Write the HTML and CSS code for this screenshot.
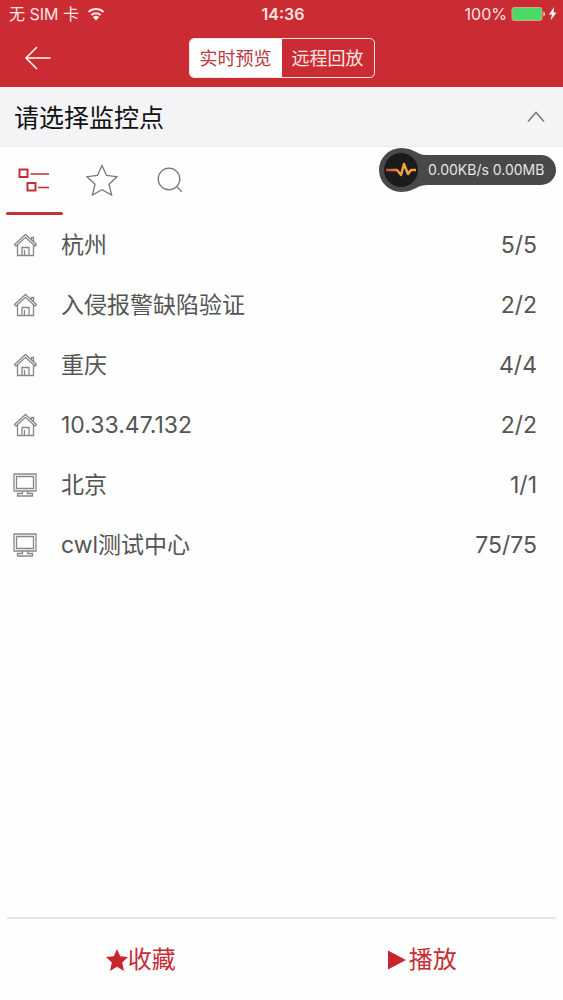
FILE: index.html
```html
<!DOCTYPE html>
<html lang="zh-CN">
<head>
<meta charset="utf-8">
<meta name="viewport" content="width=device-width, initial-scale=1">
<title>请选择监控点</title>
<link rel="stylesheet" href="styles.css">
</head>
<body>
<svg class="defs" aria-hidden="true">
  <symbol id="house" viewBox="0 0 24 24">
    <path d="M1.500 11.500 12.500 1.500l11 10-1.500 1.500-9.500-8.700L3 13z"/>
    <path d="M18.500 6.500V4.500h2v4M4.500 12v10.500H9v-8h7v8h4.500V12M11.500 22v-5M9 22.500h7"/>
  </symbol>
  <symbol id="monitor" viewBox="0 0 24 24">
    <path d="M1 1h22v17H1zM3.500 3.500h17v12h-17zM9.500 18v2.500H4.500V23h15v-2.500h-5V18"/>
  </symbol>
</svg>
<div class="app">
  <header class="top">
    <div class="status">
      <div class="carrier"><span>无 SIM 卡</span>
        <svg class="wifi" viewBox="0 0 18 14"><path d="M1.500 5a11 11 0 0 1 15 0M4.300 8a7 7 0 0 1 9.400 0"/><path class="solid" d="M9 13.500 6 10.200a4.300 4.300 0 0 1 6 0z"/></svg>
      </div>
      <time>14:36</time>
      <div class="power"><span>100%</span>
        <svg class="battery" viewBox="0 0 46 16"><rect x="1" y="1.500" width="30" height="13" rx="2"/><path class="nub" d="M32.500 5.500q3 2.500 0 5z"/><path class="bolt" d="m43 1-5 7.500h3l-1.500 6 6-8h-3z"/></svg>
      </div>
    </div>
    <nav class="nav">
      <button class="back" aria-label="返回"><svg viewBox="0 0 26 24"><path d="M25.500 12H1M12 1 1 12l11 11"/></svg></button>
      <div class="segment">
        <button class="on">实时预览</button><button>远程回放</button>
      </div>
    </nav>
  </header>
  <div class="heading">
    <h1>请选择监控点</h1>
    <button aria-label="收起"><svg viewBox="0 0 18 12"><path d="M1 10.500 9 1.500l8 9"/></svg></button>
  </div>
  <div class="tabs">
    <button class="tab active" aria-label="列表"><svg viewBox="0 0 32 24"><path class="thick" d="M1.500 1.500h8v7.500h-8zM9.500 15h8v7.500h-8z"/><path d="M12.500 6H31M20 19.500h11"/></svg></button>
    <button class="tab" aria-label="收藏夹"><svg viewBox="0 0 32 32"><path d="m16 1.500 4.500 10 10.500 1.200-8 7.500 2.600 10.800L16 25.700 6.400 31 9 20.200 1 12.700l10.500-1.200z"/></svg></button>
    <button class="tab" aria-label="搜索"><svg viewBox="0 0 32 32"><circle cx="15" cy="15" r="10.800"/><path d="m22.800 22.800 5 5"/></svg></button>
  </div>
  <ul class="list">
    <li><svg><use href="#house"/></svg><span>杭州</span><b>5/5</b></li>
    <li><svg><use href="#house"/></svg><span>入侵报警缺陷验证</span><b>2/2</b></li>
    <li><svg><use href="#house"/></svg><span>重庆</span><b>4/4</b></li>
    <li><svg><use href="#house"/></svg><span>10.33.47.132</span><b>2/2</b></li>
    <li><svg><use href="#monitor"/></svg><span>北京</span><b>1/1</b></li>
    <li><svg><use href="#monitor"/></svg><span>cwl测试中心</span><b>75/75</b></li>
  </ul>
  <footer>
    <hr>
    <div class="actions">
      <button><svg viewBox="0 0 22 22"><path d="m11 0 3.200 7.300 7.800.8-5.800 5.400L18 22l-7-4.200L4 22l1.800-8.500L0 8.100l7.800-.8z"/></svg>收藏</button>
      <button><svg class="play" viewBox="0 0 18 22"><path d="M0 1.500 18 11 0 20.500z"/></svg>播放</button>
    </div>
  </footer>
  <div class="traffic">
    <svg viewBox="0 0 178 44">
      <defs><linearGradient id="pulse" gradientUnits="userSpaceOnUse" x1="7" y1="0" x2="36" y2="0"><stop offset="0" stop-color="#d9422f"/><stop offset=".5" stop-color="#f0a23c"/><stop offset="1" stop-color="#f5a13c"/></linearGradient></defs>
      <path fill="#4a494a" d="M22 0c8 0 13 3 18 5.500q3 1.500 8 1.500h114a15 15 0 0 1 0 30H48q-5 0-8 1.500C35 41 30 44 22 44a22 22 0 0 1 0-44z"/>
      <circle cx="22" cy="22" r="17" fill="#1b1a1c"/>
      <path fill="none" stroke="url(#pulse)" stroke-width="2.500" stroke-linejoin="round" d="M7 22h11l4 5 3-11 4 10 3-4h5"/>
    </svg>
    <span>0.00KB/s 0.00MB</span>
  </div>
</div>
</body>
</html>
```
FILE: styles.css
```css
* { box-sizing: border-box; }
body {
  margin: 0;
  background: #fefefe;
  color: #555;
  font-family: Inter, "Noto Sans CJK SC", sans-serif;
}
button {
  padding: 0;
  border: 0;
  background: none;
  color: inherit;
  font: inherit;
}
svg {
  display: block;
  flex: none;
  fill: none;
  stroke: currentColor;
}
.defs { position: absolute; width: 0; height: 0; }
.app {
  position: relative;
  display: flex;
  flex-direction: column;
  min-height: 100vh;
}
.top { background: #cb2b32; color: #fff; }
.status {
  display: grid;
  grid-template-columns: 1fr auto 1fr;
  align-items: center;
  height: 28px;
  padding: 0 6px 0 9px;
  font-size: 16px;
  line-height: 28px;
  color: #fbe4e4;
}
.status time { font-weight: 600; }
.carrier, .power { display: flex; align-items: center; gap: 8px; }
.power { justify-content: flex-end; gap: 4px; }
.wifi { width: 18px; height: 14px; stroke-width: 2; }
.wifi .solid, .battery .nub, .battery .bolt { fill: #fff; stroke: none; }
.battery { width: 46px; height: 16px; fill: #4cd964; stroke: #d9a08a; }
.nav {
  display: grid;
  grid-template-columns: 1fr auto 1fr;
  align-items: center;
  height: 59px;
  padding: 0 25px;
}
.back svg { width: 26px; height: 24px; stroke-width: 1.5; }
.segment {
  display: flex;
  height: 40px;
  overflow: hidden;
  border: 1px solid #fbe4e4;
  border-radius: 5px;
}
.segment button {
  width: 92px;
  padding-bottom: 2px;
  font-size: 18px;
  color: #fbe4e4;
}
.segment .on { background: #fff; color: #b83843; }
.heading {
  display: flex;
  align-items: center;
  justify-content: space-between;
  height: 60px;
  padding: 0 18px 0 14px;
  background: #f4f3f5;
  border-bottom: 1px solid #ececee;
}
.heading h1 {
  margin: 0;
  padding-bottom: 2px;
  font-size: 25px;
  font-weight: 400;
  color: #111;
}
.heading svg { width: 18px; height: 12px; stroke: #777; stroke-width: 1.5; }
.tabs { display: flex; height: 68px; }
.tab {
  position: relative;
  display: flex;
  justify-content: center;
  align-items: center;
  width: 68px;
  padding-bottom: 2px;
  color: #777;
}
.tab svg { width: 32px; height: 32px; stroke-width: 1.3; }
.tab.active { color: #bf3036; }
.tab.active svg { height: 24px; }
.tab .thick { stroke-width: 2; }
.tab.active::after {
  content: "";
  position: absolute;
  left: 6px;
  right: 5px;
  bottom: 0;
  height: 3px;
  border-radius: 2px;
  background: #c0353b;
}
.list { flex: 1; margin: 0; padding: 0; list-style: none; }
.list li {
  display: flex;
  align-items: center;
  height: 60px;
  padding: 0 26px 0 13px;
  font-size: 23px;
  line-height: 32px;
}
.list svg { width: 24px; height: 24px; stroke: #888; stroke-width: 1.3; }
.list span { flex: 1; padding-left: 24px; }
.list b { font-weight: 400; }
footer hr {
  height: 2px;
  margin: 0 7px;
  border: 0;
  background: #e6e6e6;
}
.actions {
  display: flex;
  height: 81px;
  color: #c72c35;
}
.actions button {
  display: flex;
  flex: 1;
  align-items: center;
  justify-content: center;
  font-size: 24px;
  line-height: 32px;
}
.actions svg { width: 22px; height: 22px; fill: #c9252c; stroke: none; }
.actions .play { width: 18px; margin-right: 3px; }
.traffic {
  position: absolute;
  top: 148px;
  right: 6px;
  display: grid;
  align-items: center;
  color: #e4e4e4;
  font-size: 14px;
}
.traffic svg { grid-area: 1 / 1; width: 178px; height: 44px; stroke: none; }
.traffic span { grid-area: 1 / 1; padding-left: 49px; padding-bottom: 2px; }
```
